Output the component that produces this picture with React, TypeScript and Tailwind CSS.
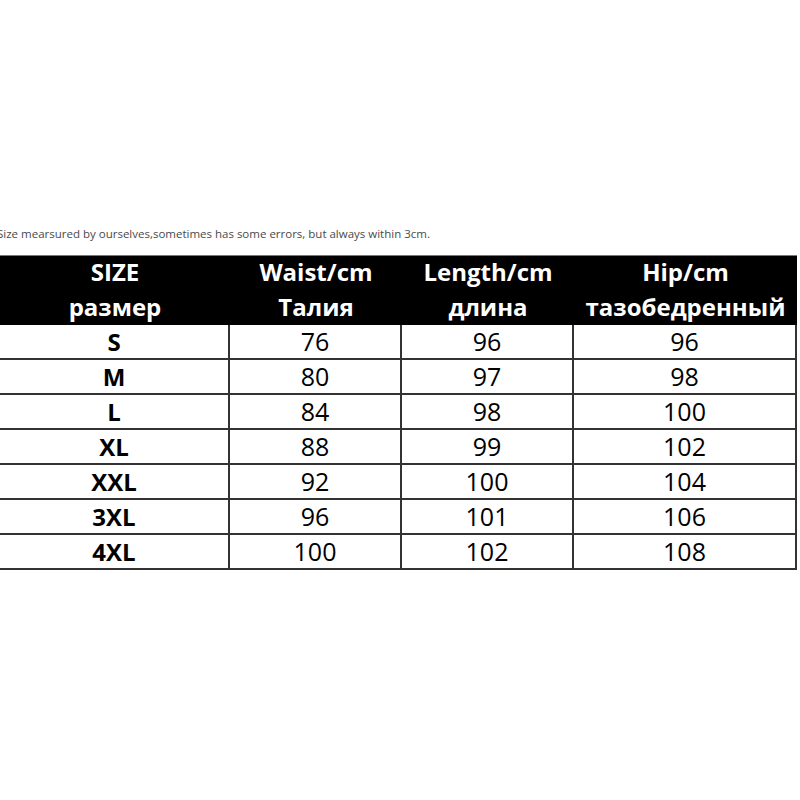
const rows = [
  ["S", "76", "96", "96"],
  ["M", "80", "97", "98"],
  ["L", "84", "98", "100"],
  ["XL", "88", "99", "102"],
  ["XXL", "92", "100", "104"],
  ["3XL", "96", "101", "106"],
  ["4XL", "100", "102", "108"],
];

const headers = [
  ["SIZE", "размер"],
  ["Waist/cm", "Талия"],
  ["Length/cm", "длина"],
  ["Hip/cm", "тазобедренный"],
];

export default function App() {
  return (
    <div
      className="w-[800px] h-[800px] bg-white overflow-hidden"
      style={{ fontFamily: '"Open Sans", "Liberation Sans", sans-serif' }}
    >
      {/* caption */}
      <p className="pt-[226px] -ml-[3px] h-[255px] text-[11.5px] leading-[16px] text-[#4a4a4a] whitespace-nowrap">
        Size mearsured by ourselves,sometimes has some errors, but always within 3cm.
      </p>

      {/* table */}
      <div className="grid grid-cols-[230px_172px_172px_223px] w-[797px]">
        {headers.map((h, i) => (
          <div
            key={i}
            className="h-[70px] bg-black border-t border-[#777] flex flex-col items-center justify-center pb-[3px] text-white font-bold text-[24px] leading-[35px]"
          >
            <span>{h[0]}</span>
            <span>{h[1]}</span>
          </div>
        ))}

        {rows.map((r, ri) =>
          r.map((c, ci) => (
            <div
              key={ri + "-" + ci}
              className={`h-[35px] flex items-center justify-center border-b-2 border-r-2 border-[#333] text-black ${
                ci === 0 ? "font-bold text-[24px]" : "text-[25px]"
              }`}
            >
              {c}
            </div>
          ))
        )}
      </div>
    </div>
  );
}
